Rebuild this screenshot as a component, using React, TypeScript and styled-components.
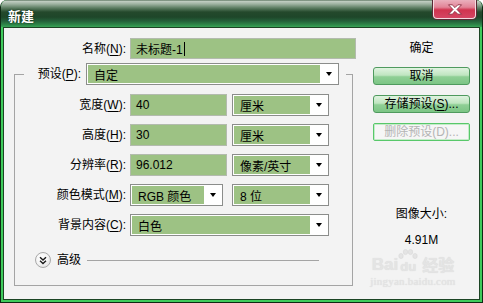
import React from 'react';
import styled, { createGlobalStyle } from 'styled-components';

const Global = createGlobalStyle`
  html, body { margin: 0; padding: 0; background: #ffffff; }
  body { font-family: "Liberation Sans", "Noto Sans CJK SC", sans-serif; font-size: 12px; color: #000; }
  * { box-sizing: border-box; }
`;

const Window = styled.div`
  position: relative;
  width: 483px;
  height: 303px;
  display: flex;
  flex-direction: column;
  background: #3fcb5c;
  border: 1px solid #0e2a14;
  border-top: 0;
  border-radius: 7px 7px 0 0;
  overflow: hidden;
`;

const TitleBar = styled.div`
  height: 27px;
  flex: none;
  display: flex;
  align-items: flex-start;
  padding-left: 7px;
  background: linear-gradient(
    to bottom,
    #3d5a42 0px,
    #c4d0c5 1px,
    #9eb2a1 4px,
    #5b7c61 8px,
    #24492c 12px,
    #1e4629 17px,
    #24603a 21px,
    #2f8a4a 25px,
    #37a456 27px
  );
`;

const TitleText = styled.div`
  margin-top: 8px;
  color: #ffffff;
  font-family: "Noto Sans CJK SC", sans-serif;
  font-weight: 700;
  font-size: 13px;
  line-height: 15px;
  text-shadow: 0 0 2px #0b2410;
`;

const CloseButton = styled.div`
  margin-left: auto;
  margin-right: 6px;
  width: 43px;
  height: 19px;
  display: flex;
  align-items: center;
  justify-content: center;
  border: 1px solid #f4dbe1;
  border-top: 0;
  border-radius: 0 0 4px 4px;
  background: linear-gradient(to bottom, #eab0bd 0%, #e28497 40%, #d0344f 55%, #d54663 100%);
  box-shadow: 0 0 0 1px #5a2a34;
`;

const Content = styled.div`
  position: relative;
  flex: 1;
  margin: 0 2px 2px 2px;
  border: 1px solid #1c4424;
  background: #f3f3f3;
  display: flex;
  justify-content: space-between;
  padding: 10px 9px 0 10px;
`;

const LeftColumn = styled.div`
  width: 346px;
  display: flex;
  flex-direction: column;
`;

const RightColumn = styled.div`
  width: 97px;
  display: flex;
  flex-direction: column;
  align-items: center;
`;

const NameRow = styled.div`
  display: grid;
  grid-template-columns: 112px 226px;
  column-gap: 4px;
  align-items: center;
  height: 21px;
`;

const Label = styled.div`
  text-align: right;
  white-space: nowrap;
  line-height: 16px;
`;

const U = styled.span`
  text-decoration: underline;
  text-underline-offset: 2px;
`;

const TextField = styled.div<{ $w?: number; $h?: number }>`
  width: ${(p) => (p.$w ? `${p.$w}px` : '100%')};
  height: ${(p) => p.$h ?? 22}px;
  display: flex;
  align-items: center;
  padding-left: 5px;
  background: #9dc284;
  border: 1px solid #b3bbae;
  white-space: nowrap;
`;

const Caret = styled.span`
  display: inline-block;
  width: 1px;
  height: 14px;
  margin-left: 1px;
  background: #000;
`;

const Group = styled.fieldset`
  width: 339px;
  margin: 4px 0 0 0;
  padding: 9px 0 17px 0;
  border: 1px solid #a4a4a4;
  min-width: 0;
`;

const Legend = styled.legend`
  margin-left: 9px;
  padding: 0 7px 0 0;
  height: 22px;
  display: flex;
  align-items: center;
  gap: 5px;
`;

const LegendLabel = styled(Label)`
  width: 57px;
`;

const Rows = styled.div`
  display: flex;
  flex-direction: column;
  gap: 8px;
`;

const Row = styled.div`
  display: grid;
  grid-template-columns: 111px auto;
  column-gap: 4px;
  align-items: center;
  height: 22px;
`;

const Controls = styled.div<{ $gap: number }>`
  display: flex;
  gap: ${(p) => p.$gap}px;
  align-items: center;
`;

const SelectBox = styled.div<{ $w: number }>`
  width: ${(p) => p.$w}px;
  height: 22px;
  display: flex;
  padding: 1px;
  background: #ffffff;
  border: 1px solid #8b8d8b;
`;

const SelectValue = styled.div`
  flex: 1;
  display: flex;
  align-items: center;
  padding-left: 6px;
  background: #9dc284;
  white-space: nowrap;
`;

const SelectArrow = styled.div`
  width: 17px;
  display: flex;
  align-items: center;
  justify-content: center;
  &::after {
    content: '';
    width: 0;
    height: 0;
    border-left: 3.5px solid transparent;
    border-right: 3.5px solid transparent;
    border-top: 4px solid #000;
  }
`;

const AdvancedRow = styled.div`
  margin-top: 16px;
  height: 16px;
  display: flex;
  align-items: center;
  padding-left: 20px;
  padding-right: 33px;
`;

const AdvancedToggle = styled.div`
  width: 16px;
  height: 16px;
  border-radius: 50%;
  border: 1px solid #a9a9a9;
  background: radial-gradient(circle at 40% 35%, #ffffff 0%, #f4f4f4 50%, #d6d6d6 100%);
  display: flex;
  align-items: center;
  justify-content: center;
`;

const AdvancedText = styled.div`
  margin-left: 6px;
  line-height: 16px;
`;

const AdvancedLine = styled.div`
  flex: 1;
  height: 1px;
  margin-left: 6px;
  background: #a4a4a4;
`;

const Button = styled.div<{ $kind: 'default' | 'normal' | 'disabled' }>`
  width: 97px;
  height: 18px;
  display: flex;
  align-items: center;
  justify-content: center;
  border-radius: 3px;
  white-space: nowrap;
  line-height: 16px;
  ${(p) =>
    p.$kind === 'normal'
      ? `
    border: 1px solid #4f9a5e;
    background: linear-gradient(to bottom, #e0f3e0 0%, #bfe5c0 45%, #8fcf95 55%, #7cc585 100%);
    color: #000;
  `
      : p.$kind === 'disabled'
      ? `
    border: 1px solid #58c86a;
    box-shadow: inset 0 0 0 1px #c4ecc9;
    background: #f6f6f6;
    color: #b4b4b4;
    border-radius: 2px;
  `
      : `
    border: 1px solid transparent;
    background: transparent;
    color: #000;
  `}
`;

const ButtonStack = styled.div`
  margin-top: 1px;
  display: flex;
  flex-direction: column;
  gap: 10px;
`;

const InfoLabel = styled.div<{ $top: number }>`
  margin-top: ${(p) => p.$top}px;
  line-height: 16px;
  text-align: center;
  white-space: nowrap;
`;

const Watermark = styled.div`
  position: absolute;
  left: 361px;
  top: 221px;
  width: 96px;
  display: flex;
  flex-direction: column;
  align-items: center;
  color: #e4e4e4;
  text-shadow: 0 0 1px #d6d6d6;
  pointer-events: none;
`;

const WmTop = styled.div`
  display: flex;
  align-items: flex-end;
  font-family: "Liberation Sans", sans-serif;
  font-weight: 700;
  font-size: 17px;
  line-height: 17px;
`;

const WmCjk = styled.span`
  margin-left: 4px;
  font-family: "Noto Sans CJK SC", sans-serif;
  font-size: 16px;
`;

const WmPaw = styled.span`
  display: flex;
  flex-direction: column;
  align-items: center;
  font-size: 13px;
  line-height: 13px;
`;

const WmBottom = styled.div`
  margin-top: 3px;
  font-family: "Liberation Serif", serif;
  font-size: 11px;
  line-height: 11px;
  letter-spacing: 0.2px;
`;

function Select({ w, value }: { w: number; value: string }) {
  return (
    <SelectBox $w={w}>
      <SelectValue>{value}</SelectValue>
      <SelectArrow />
    </SelectBox>
  );
}

export default function App() {
  return (
    <>
      <Global />
      <Window>
        <TitleBar>
          <TitleText>新建</TitleText>
          <CloseButton>
            <svg width="16" height="11" viewBox="0 0 16 11">
              <path
                d="M1.5 0.8 H5.2 L8 3.6 L10.8 0.8 H14.5 L10 5.5 L14.5 10.2 H10.8 L8 7.4 L5.2 10.2 H1.5 L6 5.5 Z"
                fill="#ffffff"
                stroke="#8a2a3e"
                strokeWidth="0.9"
                strokeLinejoin="round"
              />
            </svg>
          </CloseButton>
        </TitleBar>
        <Content>
          <LeftColumn>
            <NameRow>
              <Label>
                名称(<U>N</U>):
              </Label>
              <TextField $h={21}>
                未标题-1
                <Caret />
              </TextField>
            </NameRow>
            <Group>
              <Legend>
                <LegendLabel>
                  预设(<U>P</U>):
                </LegendLabel>
                <Select w={253} value="自定" />
              </Legend>
              <Rows>
                <Row>
                  <Label>
                    宽度(<U>W</U>):
                  </Label>
                  <Controls $gap={5}>
                    <TextField $w={97}>40</TextField>
                    <Select w={97} value="厘米" />
                  </Controls>
                </Row>
                <Row>
                  <Label>
                    高度(<U>H</U>):
                  </Label>
                  <Controls $gap={5}>
                    <TextField $w={97}>30</TextField>
                    <Select w={97} value="厘米" />
                  </Controls>
                </Row>
                <Row>
                  <Label>
                    分辨率(<U>R</U>):
                  </Label>
                  <Controls $gap={5}>
                    <TextField $w={97}>96.012</TextField>
                    <Select w={97} value="像素/英寸" />
                  </Controls>
                </Row>
                <Row>
                  <Label>
                    颜色模式(<U>M</U>):
                  </Label>
                  <Controls $gap={9}>
                    <Select w={93} value="RGB 颜色" />
                    <Select w={97} value="8 位" />
                  </Controls>
                </Row>
                <Row>
                  <Label>
                    背景内容(<U>C</U>):
                  </Label>
                  <Controls $gap={5}>
                    <Select w={199} value="白色" />
                  </Controls>
                </Row>
              </Rows>
              <AdvancedRow>
                <AdvancedToggle>
                  <svg width="8" height="9" viewBox="0 0 8 9">
                    <path
                      d="M1 1.2 L4 4 L7 1.2 M1 4.8 L4 7.6 L7 4.8"
                      fill="none"
                      stroke="#1a1a1a"
                      strokeWidth="1.4"
                    />
                  </svg>
                </AdvancedToggle>
                <AdvancedText>高级</AdvancedText>
                <AdvancedLine />
              </AdvancedRow>
            </Group>
          </LeftColumn>
          <RightColumn>
            <ButtonStack>
              <Button $kind="default">确定</Button>
              <Button $kind="normal">取消</Button>
              <Button $kind="normal">
                存储预设(<U>S</U>)...
              </Button>
              <Button $kind="disabled">删除预设(D)...</Button>
            </ButtonStack>
            <InfoLabel $top={65}>图像大小:</InfoLabel>
            <InfoLabel $top={10}>4.91M</InfoLabel>
          </RightColumn>
          <Watermark>
            <WmTop>
              Bai
              <WmPaw>
                <svg width="20" height="11" viewBox="0 0 20 11">
                  <g fill="#e4e4e4" stroke="#d6d6d6" strokeWidth="0.6">
                    <ellipse cx="3" cy="7" rx="2.2" ry="2.6" />
                    <ellipse cx="7.5" cy="3" rx="2.2" ry="2.6" />
                    <ellipse cx="12.5" cy="3" rx="2.2" ry="2.6" />
                    <ellipse cx="17" cy="7" rx="2.2" ry="2.6" />
                  </g>
                </svg>
                <span>du</span>
              </WmPaw>
              <WmCjk>经验</WmCjk>
            </WmTop>
            <WmBottom>jingyan.baidu.com</WmBottom>
          </Watermark>
        </Content>
      </Window>
    </>
  );
}
